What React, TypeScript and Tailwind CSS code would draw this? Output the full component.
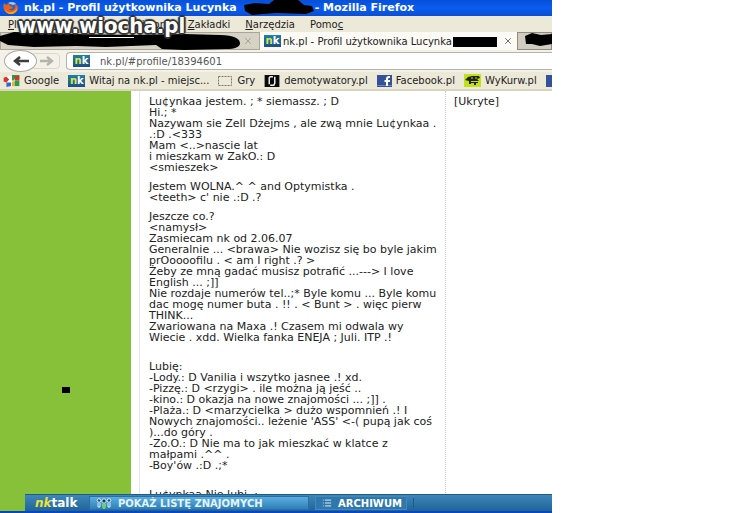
import { ReactNode } from "react";
import { List, X } from "lucide-react";

const menuItems = [
  { before: "", key: "P", after: "lik" },
  { before: "", key: "E", after: "dycja" },
  { before: "", key: "W", after: "idok" },
  { before: "", key: "H", after: "istoria" },
  { before: "", key: "Z", after: "akładki" },
  { before: "", key: "N", after: "arzędzia" },
  { before: "Pomo", key: "c", after: "" },
];

const intro = [
  "Lu¢ynkaa jestem. ; * siemassz. ; D",
  "Hi.; *",
  "Nazywam sie Zell Dżejms , ale zwą mnie Lu¢ynkaa .",
  ".:D .<333",
  "Mam <..>nascie lat",
  "i mieszkam w ZakO.: D",
  "<smieszek>",
];

const status = ["Jestem WOLNA.^ ^ and Optymistka .", "<teeth> c' nie .:D .?"];

const more = [
  "Jeszcze co.?",
  "<namysł>",
  "Zasmiecam nk od 2.06.07",
  "Generalnie ... <brawa> Nie wozisz się bo byle jakim",
  "prOoooofilu . < am I right .? >",
  "Żeby ze mną gadać musisz potrafić ...---> I love",
  "English ... ;]]",
  "Nie rozdaje numerów tel..;* Byle komu ... Byle komu",
  "dac mogę numer buta . !! . < Bunt > . więc pierw",
  "THINK...",
  "Zwariowana na Maxa .! Czasem mi odwala wy",
  "Wiecie . xdd. Wielka fanka ENEJA ; Juli. ITP .!",
];

const likes = [
  "Lubię:",
  "-Lody.: D Vanilia i wszytko jasnee .! xd.",
  "-Pizzę.: D <rzygi> . ile można ją jeść ..",
  "-kino.: D okazja na nowe znajomości ... ;]] .",
  "-Plaża.: D <marzycielka > dużo wspomnień .! I",
  "Nowych znajomości.. leżenie 'ASS' <-( pupą jak coś",
  ")...do góry .",
  "-Zo.O.: D Nie ma to jak mieszkać w klatce z",
  "małpami .^^ .",
  "-Boy'ów .:D .;*",
];

function Lines({ lines }: { lines: string[] }) {
  return (
    <p>
      {lines.map((line) => (
        <span key={line} className="block">
          {line}
        </span>
      ))}
    </p>
  );
}

function NkIcon() {
  return (
    <span className="flex h-3 w-[17px] shrink-0 items-center justify-center bg-gradient-to-b from-[#1f7fa8] to-[#1d4f86] text-[10px] leading-none font-bold text-white">
      <span className="text-[#d8e84a]">n</span>k
    </span>
  );
}

function FirefoxIcon() {
  return (
    <svg viewBox="0 0 16 14" className="h-3.5 w-[18px] shrink-0">
      <ellipse cx="8" cy="7" rx="7" ry="6" fill="#3b62b5" />
      <path d="M5 2c3-2 7-1 8 1l-3 1-3-1z" fill="#9fc8ee" />
      <path
        d="M1 2l2 2 3-1 1 2 3 1-2 2H6c1 2 5 2 6-1 1-2 0-3-1-4 4 1 5 4 3 7-2 3-8 4-11 1C0 9 0 5 1 2z"
        fill="#e8641b"
      />
      <path d="M2 8c1 3 4 4 7 3 2 0 4-2 5-4 0 4-3 6-6 6s-6-2-6-5z" fill="#f6a821" />
    </svg>
  );
}

function GoogleIcon() {
  return (
    <svg viewBox="0 0 17 13" className="h-3 w-[17px] shrink-0">
      <rect x="4" y="1" width="8" height="11" fill="#fff" />
      <path d="M0 3l3-1 3 3-3 3-3-1z" fill="#d8342b" />
      <path d="M3 8h5v4l-5 1z" fill="#3267c9" />
      <path d="M9 0h8v4h-5l-1 2H9z" fill="#2f9b46" />
      <path d="M12 1h5v5h-5z" fill="#d8342b" />
      <path d="M9 7h3v5H9z" fill="#e7b52c" />
      <path d="M12 6h5v6h-5z" fill="#2f9b46" />
    </svg>
  );
}

function FolderIcon() {
  return (
    <svg viewBox="0 0 15 11" className="h-[11px] w-[15px] shrink-0">
      <rect
        x="0.5"
        y="1.5"
        width="13"
        height="9"
        fill="none"
        stroke="#777"
        strokeDasharray="2 1"
      />
    </svg>
  );
}

function DemotyIcon() {
  return (
    <svg viewBox="0 0 16 13" className="h-3 w-4 shrink-0">
      <rect width="16" height="13" fill="#0a0a0a" />
      <path
        d="M5 10V3l1-1h3M11 2v7l-1 2H6"
        fill="none"
        stroke="#eee"
        strokeWidth="1.6"
      />
    </svg>
  );
}

function FacebookIcon() {
  return (
    <svg viewBox="0 0 15 12" className="h-3 w-[15px] shrink-0">
      <rect width="15" height="12" fill="#34519a" />
      <rect y="10" width="15" height="1" fill="#6d86c2" />
      <path d="M13 2h-1c-2 0-2 1-2 2v7M7.5 6H13" fill="none" stroke="#fff" strokeWidth="2" />
    </svg>
  );
}

function WykurwIcon() {
  return (
    <svg viewBox="0 0 17 13" className="h-[13px] w-[17px] shrink-0">
      <rect width="17" height="13" fill="#c3e01a" />
      <path d="M1 6l3-3 4-1 7 0 1 2-3 1 2 2H7v3H5V7z" fill="#1d2408" />
      <path d="M7 8h7v1h-2v2h-2V9H7z" fill="#1d2408" />
      <path d="M7 4h2M11 4h2" stroke="#c3e01a" />
    </svg>
  );
}

function PeopleIcon() {
  return (
    <svg viewBox="0 0 16 12" className="h-3 w-4 shrink-0">
      <g fill="none" stroke="#d9eefb">
        <circle cx="3" cy="3.5" r="1.8" fill="#1c5580" />
        <circle cx="13" cy="3.5" r="1.8" fill="#1c5580" />
        <path d="M2 6v4h2V6M12 6v4h2V6" />
      </g>
      <circle cx="8" cy="4" r="2.2" fill="#184263" stroke="#d9eefb" />
      <path d="M6 7h4v2L9 12H7L6 9z" fill="#65d36f" />
    </svg>
  );
}

function Bookmark({ icon, children }: { icon: ReactNode; children: ReactNode }) {
  return (
    <a href="#bookmark" className="flex shrink-0 items-center gap-1">
      {icon}
      {children}
    </a>
  );
}

function TitleBar() {
  return (
    <header className="flex h-4 shrink-0 items-center gap-1 overflow-hidden bg-gradient-to-b from-[#0750d8] via-[#0a5cf0] to-[#0a4fd2] pl-0.5 text-[11px] font-bold whitespace-nowrap text-white">
      <FirefoxIcon />
      <h1 className="flex">
        nk.pl - Profil użytkownika Lucynka
        <span className="w-[78px]" />- Mozilla Firefox
      </h1>
    </header>
  );
}

function TabBar() {
  return (
    <div className="flex h-[18px] shrink-0 items-stretch overflow-hidden bg-[#e9e5d6] whitespace-nowrap">
      <button
        type="button"
        aria-label="Zamknij kartę"
        className="flex w-[260px] shrink-0 items-center justify-end border border-[#a9a598] bg-[#d6d2c4] pr-1.5"
      >
        <X className="h-2.5 w-2.5 text-[#999]" />
      </button>
      <div className="flex w-[257px] shrink-0 items-center gap-0.5 bg-[#fbfaf5] pl-1">
        <NkIcon />
        <button type="button">nk.pl - Profil użytkownika Lucynka</button>
        <button type="button" aria-label="Zamknij" className="mr-1 ml-auto">
          <X className="h-2.5 w-2.5 text-[#555]" />
        </button>
      </div>
      <button
        type="button"
        aria-label="Następna karta"
        className="flex-1 border border-[#8f8c82] bg-[#d0ccc0]"
      />
    </div>
  );
}

function NavBar() {
  return (
    <div className="flex h-[22px] shrink-0 items-center bg-[#f4f2e8] pl-1">
      <button
        type="button"
        aria-label="Wstecz"
        className="z-10 flex h-[22px] w-[33px] shrink-0 items-center justify-center rounded-[50%] border border-[#aaa89f] bg-white"
      >
        <svg viewBox="0 0 16 10" className="h-2.5 w-4">
          <path d="M7 1L2 5l5 4M2 5h14" fill="none" stroke="#3d3d3d" strokeWidth="2.6" />
        </svg>
      </button>
      <button
        type="button"
        aria-label="Dalej"
        className="-ml-1 flex h-4 w-[27px] shrink-0 items-center justify-center rounded-r-sm border border-[#dad7cc] bg-[#f3f1e8]"
      >
        <svg viewBox="0 0 14 10" className="h-2.5 w-3.5">
          <path d="M7 1l5 4-5 4M0 5h12" fill="none" stroke="#b5b3aa" strokeWidth="2.4" />
        </svg>
      </button>
      <label className="ml-1.5 flex h-[18px] flex-1 items-center gap-2.5 rounded-l-sm border border-r-0 border-[#b5b3aa] bg-white pl-1.5">
        <NkIcon />
        <input
          type="text"
          aria-label="Adres"
          defaultValue="nk.pl/#profile/18394601"
          className="w-full text-[#555] outline-none"
        />
      </label>
    </div>
  );
}

// Black marker strokes that hide names in the window title and the tabs
function Redactions() {
  return (
    <svg
      viewBox="0 0 552 52"
      className="pointer-events-none absolute top-0 left-0 h-[52px] w-[552px]"
    >
      <path d="M244 5l11-2 14 1 5-4h24l6 5 8 1 2 5-8 3-30-1-24 2-7-4z" />
      <path d="M0 36l14-4 60 2 60 1 50-1 36 1c14 0 20 4 20 8s-5 6-14 6l-42 1-22-1-6-4-50 2-30-1-42 1-26-2-8-4z" />
      <rect x="453" y="37" width="44" height="10" />
      <path d="M525 36l7-3 9 2 11-1v10l-12 2-8-2-6 0z" />
    </svg>
  );
}

export default function App() {
  return (
    <div className="h-screen overflow-hidden bg-white">
      <div className="relative flex h-full w-full max-w-[552px] flex-col overflow-hidden bg-white font-['DejaVu_Sans',sans-serif] text-[10px] text-[#222]">
        <TitleBar />
        <nav className="flex h-4 shrink-0 items-center gap-[15px] bg-[#ece9d8] pl-2 whitespace-nowrap">
          {menuItems.map((item) => (
            <button key={item.key} type="button">
              {item.before}
              <u>{item.key}</u>
              {item.after}
            </button>
          ))}
        </nav>
        <TabBar />
        <NavBar />
        <nav className="flex h-[19px] shrink-0 items-center gap-[9px] overflow-hidden border-b-2 border-[#d9d4bf] bg-[#ece9d8] pl-[3px] whitespace-nowrap">
          <Bookmark icon={<GoogleIcon />}>Google</Bookmark>
          <Bookmark icon={<NkIcon />}>Witaj na nk.pl - miejsc...</Bookmark>
          <Bookmark icon={<FolderIcon />}>Gry</Bookmark>
          <Bookmark icon={<DemotyIcon />}>demotywatory.pl</Bookmark>
          <Bookmark icon={<FacebookIcon />}>Facebook.pl</Bookmark>
          <Bookmark icon={<WykurwIcon />}>WyKurw.pl</Bookmark>
          <span className="h-3 w-4 shrink-0 bg-[#34519a]" />
        </nav>

        <Redactions />
        <div className="absolute top-3 left-[18px] font-['DejaVu_Sans_Condensed','Liberation_Sans',sans-serif] text-[22px] leading-7 font-bold text-white [text-shadow:1px_1px_1px_#333,-1px_-1px_1px_#333,1px_-1px_1px_#333,-1px_1px_1px_#333,0_2px_1px_#333,2px_0_1px_#333,-2px_0_1px_#333,0_-2px_1px_#333]">
          www.wiocha.pl
        </div>
        <div className="absolute top-[37px] left-[89px] h-px w-[45px] bg-white" />

        <main className="flex min-h-0 flex-1 overflow-hidden text-[11px] leading-[11px] whitespace-nowrap">
          <div className="flex w-[131px] shrink-0 items-center justify-center bg-[#86c139]">
            <span className="mt-[176px] h-1.5 w-2 bg-black" />
          </div>
          <div className="ml-2 flex w-[307px] shrink-0 flex-col gap-[18px] border-r border-l border-r-[#ccc] border-l-[#dfe8f0] pt-[5px] pl-[9px] [border-right-style:dotted]">
            <div className="flex flex-col gap-2">
              <Lines lines={intro} />
              <Lines lines={status} />
              <Lines lines={more} />
            </div>
            <Lines lines={likes} />
            <p>Lu¢ynkaa Nie lubi .:</p>
          </div>
          <p className="pt-[5px] pl-2">[Ukryte]</p>
        </main>

        <footer className="absolute inset-x-0 bottom-0">
          <div className="ml-[25px] flex h-[17px] items-center gap-1.5 border-t border-[#1c5c8c] bg-gradient-to-b from-[#3f87b8] to-[#1f6499] pl-2.5 font-bold whitespace-nowrap text-white">
            <a href="#nktalk" className="w-12 shrink-0 text-[12px] leading-none">
              <i className="text-[#e8e337]">nk</i>talk
            </a>
            <button
              type="button"
              className="flex h-3.5 w-[220px] shrink-0 items-center gap-1.5 border border-[#2a6f9f] bg-gradient-to-b from-[#5aaee0] to-[#2f7fb8] pl-1.5 text-[#e4f3fc]"
            >
              <PeopleIcon />
              POKAŻ LISTĘ ZNAJOMYCH
            </button>
            <button
              type="button"
              className="flex h-3.5 w-[92px] shrink-0 items-center gap-1.5 border border-[#4389b8] bg-[#2f78ab] pl-1.5"
            >
              <List className="h-2.5 w-2.5" />
              ARCHIWUM
            </button>
            <span className="h-2.5 border-l border-[#1c5c8c]" />
          </div>
          <div className="h-0.5 bg-[#0a46c0]" />
        </footer>
      </div>
    </div>
  );
}
